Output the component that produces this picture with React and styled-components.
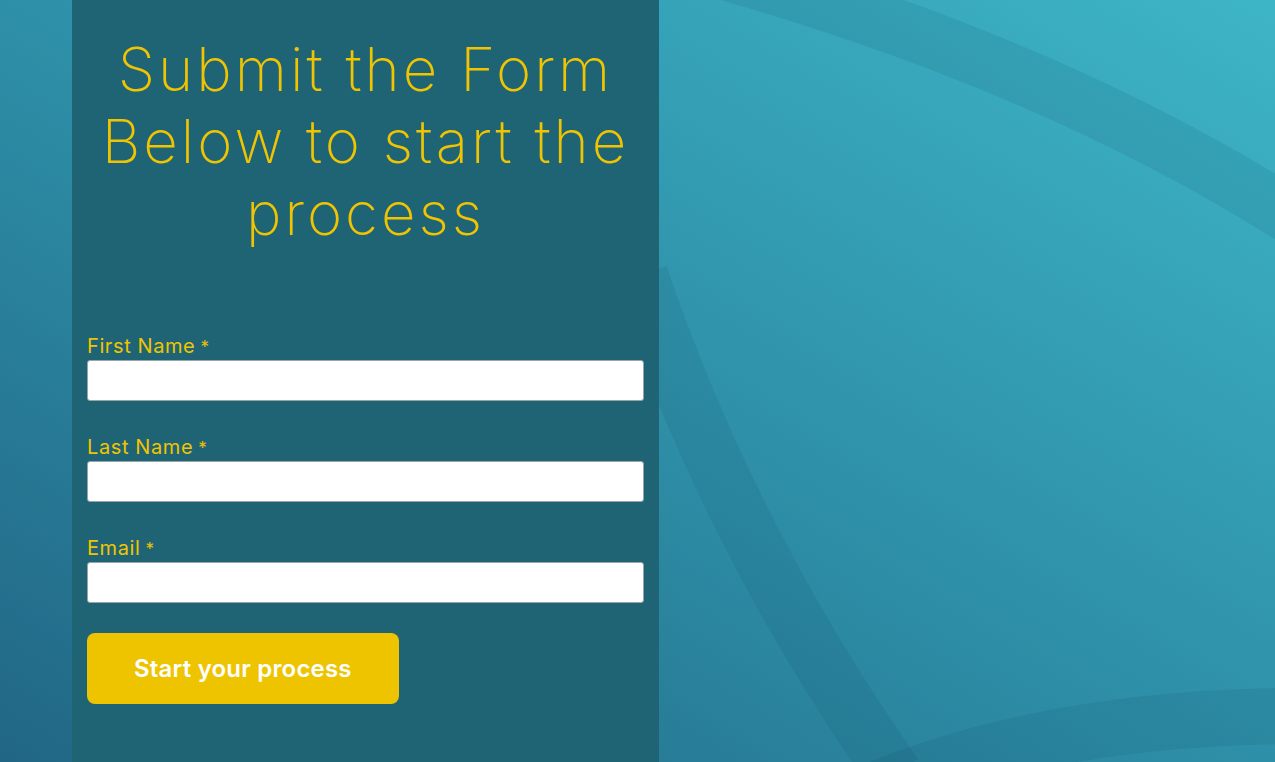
import React from "react";
import styled, { createGlobalStyle } from "styled-components";

const GlobalStyle = createGlobalStyle`
  html, body {
    margin: 0;
    padding: 0;
  }
  body {
    font-family: Inter, "Noto Sans", sans-serif;
  }
  * {
    box-sizing: border-box;
  }
`;

const Page = styled.div`
  position: relative;
  width: 100%;
  height: 762px;
  overflow: hidden;
  padding-left: 72px;
  background: linear-gradient(
    to bottom left,
    #3eb5c7 0%,
    #2e90a8 50%,
    #216685 100%
  );
`;

const Decor = styled.svg`
  position: absolute;
  inset: 0;
  width: 100%;
  height: 100%;
  pointer-events: none;
`;

const Panel = styled.div`
  position: relative;
  width: 587px;
  height: 762px;
  background-color: #1f6474;
  padding: 33px 15px 0;
`;

const Heading = styled.h1`
  margin: 0 0 85px;
  text-align: center;
  color: #f0c400;
  font-family: Inter, "Noto Sans", sans-serif;
  font-weight: 200;
  font-size: 60px;
  line-height: 72px;
  letter-spacing: 3px;
`;

const Field = styled.div`
  margin-bottom: ${(p) => (p.last ? "30px" : "34px")};
`;

const Label = styled.label`
  display: block;
  height: 24px;
  margin-bottom: 2px;
  color: #f0c400;
  font-size: 20px;
  line-height: 24px;
  font-weight: 400;
  letter-spacing: 0.6px;
`;

const Required = styled.span`
  font-size: 17px;
  line-height: 1;
  margin-left: 5px;
`;

const Input = styled.input`
  display: block;
  width: 100%;
  height: 41px;
  border: 1px solid #9aa4a8;
  border-radius: 3px;
  background: #fff;
  padding: 0 10px;
  font-size: 16px;
  outline: none;
`;

const SubmitButton = styled.button`
  height: 71px;
  padding: 0 47px;
  border: none;
  border-radius: 8px;
  background-color: #eec400;
  color: #fff;
  font-family: Inter, "Noto Sans", sans-serif;
  font-size: 24px;
  font-weight: 600;
  letter-spacing: 0.2px;
  cursor: pointer;
`;

const fields = [
  { id: "first", label: "First Name", type: "text" },
  { id: "last", label: "Last Name", type: "text" },
  { id: "email", label: "Email", type: "email" },
];

const App = () => {
  return (
    <>
      <GlobalStyle />
      <Page>
        <Decor viewBox="0 0 1275 762" preserveAspectRatio="none">
          <g fill="none" stroke="rgba(16, 70, 100, 0.12)" strokeWidth="56">
            <path d="M 560 -70 Q 1000 30 1300 222" />
            <path d="M 640 275 Q 730 540 895 775" />
            <path d="M 875 790 Q 1050 718 1290 716" />
          </g>
        </Decor>
        <Panel>
          <Heading>Submit the Form Below to start the process</Heading>
          <form onSubmit={(e) => e.preventDefault()}>
            {fields.map((f, i) => (
              <Field key={f.id} last={i === fields.length - 1}>
                <Label htmlFor={f.id}>
                  {f.label}
                  <Required>*</Required>
                </Label>
                <Input id={f.id} type={f.type} />
              </Field>
            ))}
            <SubmitButton type="submit">Start your process</SubmitButton>
          </form>
        </Panel>
      </Page>
    </>
  );
};

export default App;
